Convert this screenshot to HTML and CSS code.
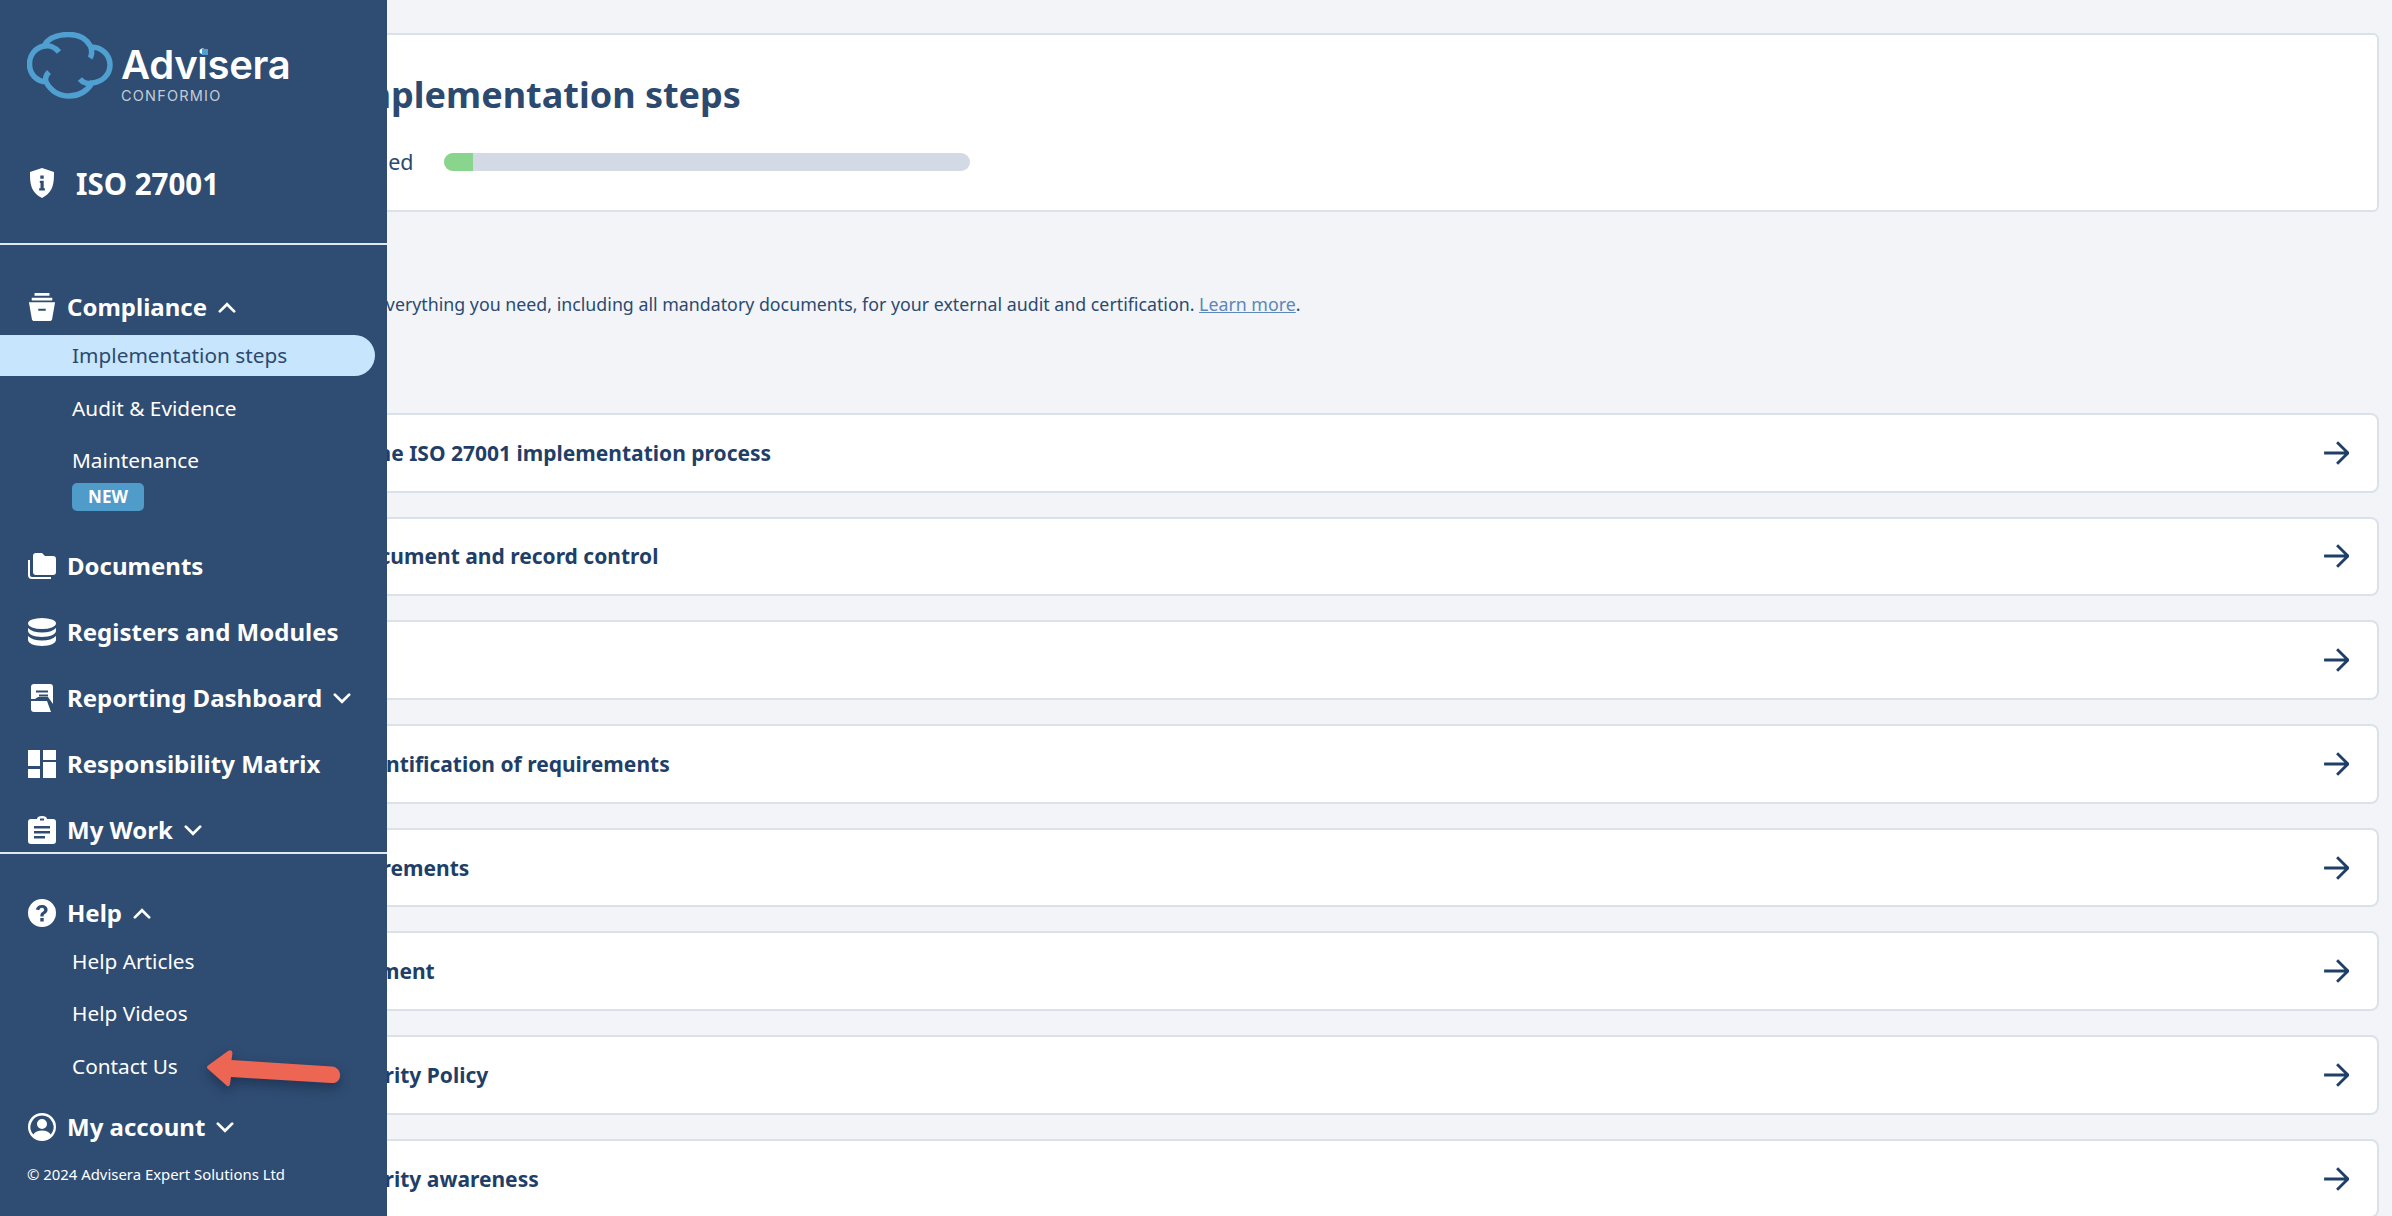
FILE: index.html
```html
<!DOCTYPE html>
<html lang="en">
<head>
<meta charset="utf-8">
<title>Implementation steps</title>
<link rel="stylesheet" href="styles.css">
</head>
<body>
<main class="main">
  <section class="head-card">
    <h1 class="title">Implementation steps</h1>
    <div class="progress-row">
      <span class="progress-label">Finished</span>
      <div class="track"><div class="fill"></div></div>
    </div>
  </section>
  <p class="intro">It has everything you need, including all mandatory documents, for your external audit and certification. <a class="learn" href="#">Learn more</a>.</p>
  <ul class="rows">
    <li class="row"><span class="indent-xs">Use the ISO 27001 implementation process</span><svg class="go" viewBox="0 0 24 24"><path d="M1 12h22M13 2l10 10-10 10"/></svg></li>
    <li class="row"><span class="indent-m">Document and record control</span><svg class="go" viewBox="0 0 24 24"><path d="M1 12h22M13 2l10 10-10 10"/></svg></li>
    <li class="row"><span>Plan</span><svg class="go" viewBox="0 0 24 24"><path d="M1 12h22M13 2l10 10-10 10"/></svg></li>
    <li class="row"><span class="indent-l">Identification of requirements</span><svg class="go" viewBox="0 0 24 24"><path d="M1 12h22M13 2l10 10-10 10"/></svg></li>
    <li class="row"><span>Requirements</span><svg class="go" viewBox="0 0 24 24"><path d="M1 12h22M13 2l10 10-10 10"/></svg></li>
    <li class="row"><span class="indent-xs">Statement</span><svg class="go" viewBox="0 0 24 24"><path d="M1 12h22M13 2l10 10-10 10"/></svg></li>
    <li class="row"><span class="indent-s">Security Policy</span><svg class="go" viewBox="0 0 24 24"><path d="M1 12h22M13 2l10 10-10 10"/></svg></li>
    <li class="row"><span class="indent-s">Security awareness</span><svg class="go" viewBox="0 0 24 24"><path d="M1 12h22M13 2l10 10-10 10"/></svg></li>
  </ul>
</main>

<aside class="sidebar">
  <div class="logo">
    <svg class="cloud" viewBox="0 0 86 67"><path d="M17 14C21 6 31 2.500 42 2.500C52 2.500 60 7 64 15C75 15 83 23 83 33C83 43 75 50 65 51C60 59 52 64 42 64C32 64 24 59 19 50C9 49 2.500 42 2.500 32C2.500 23 8 16 17 14Z"/><path d="M17 14c5-1 11 1 15 6M64 15c1 4 1 8-1 11M19 50c-1-3 0-7 3-10M65 51c-4 1-9 0-12-4"/></svg>
    <div class="wordmark">
      <div class="brand">Advisera<i class="brand-dot"></i></div>
      <div class="product">CONFORMIO</div>
    </div>
  </div>
  <div class="iso">
    <svg class="iso-icon" viewBox="0 0 24 30"><path fill-rule="evenodd" d="M12 0l12 4c0 10 0 20-12 26C0 24 0 14 0 4zM10.300 7.500h3.400v3.200h-3.400zM9.800 12.800h3.900v7.400h1.200v2.300H9.200v-2.300h1.300v-5.100H9.800z"/></svg>
    <span>ISO 27001</span>
  </div>
  <div class="divider"></div>
  <nav class="nav-top">
    <div class="item">
      <svg class="icon" viewBox="0 0 28 30"><path fill-rule="evenodd" d="M6 0h16v3H6zM3 5h22v3H3zM0 10h28l-3 17c0 2-1 3-3 3H6c-2 0-3-1-3-3zM10 17v2h8v-2z"/></svg>
      <span>Compliance</span>
      <svg class="chev" viewBox="0 0 16 10"><path d="M1.500 8.500L8 2l6.500 6.500"/></svg>
    </div>
    <a class="sub active">Implementation steps</a>
    <a class="sub">Audit &amp; Evidence</a>
    <a class="sub sub-badge">Maintenance</a>
    <span class="badge">NEW</span>
    <div class="item item-docs">
      <svg class="icon" viewBox="0 0 28 26"><path d="M5 3c0-2 1-3 3-3h6l3 3h8c2 0 3 1 3 3v13c0 2-1 3-3 3H8c-2 0-3-1-3-3z"/><path class="line" d="M1 7v15c0 2 1 3 3 3h19"/></svg>
      <span>Documents</span>
    </div>
    <div class="item">
      <svg class="icon" viewBox="0 0 28 28"><ellipse cx="14" cy="5.500" rx="14" ry="5.500"/><path d="M0 10c3 3 8 4.500 14 4.500S25 13 28 10v3c0 3-6 6-14 6S0 16 0 13zM0 18c3 3 8 4.500 14 4.500S25 21 28 18v4c0 3-6 6-14 6S0 25 0 22z"/></svg>
      <span>Registers and Modules</span>
    </div>
    <div class="item">
      <svg class="icon" viewBox="0 0 28 28"><path fill-rule="evenodd" d="M6 0H22c2 0 3 1 3 3V20L20 13H10L7 15H3V3C3 1 4 0 6 0zM8 6.500v2h12v-2zM11 10.500v2h9v-2z"/><path d="M3 17H19L23 28H6c-2 0-3-1-3-3z"/></svg>
      <span>Reporting Dashboard</span>
      <svg class="chev" viewBox="0 0 16 10"><path d="M1.500 1.500L8 8l6.500-6.500"/></svg>
    </div>
    <div class="item">
      <svg class="icon" viewBox="0 0 28 28"><path d="M0 0h12v16H0zM15 0h13v10H15zM15 12h13v16H15zM0 19h12v9H0z"/></svg>
      <span>Responsibility Matrix</span>
    </div>
    <div class="item">
      <svg class="icon" viewBox="0 0 28 28"><path fill-rule="evenodd" d="M3 3h6c0-2 2-3 5-3s5 1 5 3h6c2 0 3 1 3 3v19c0 2-1 3-3 3H3c-2 0-3-1-3-3V6c0-2 1-3 3-3zM12 2.500v2h4v-2zM6 10v2.500h16V10zM6 15v2.500h16V15zM6 20v2.500h11V20z"/></svg>
      <span>My Work</span>
      <svg class="chev" viewBox="0 0 16 10"><path d="M1.500 1.500L8 8l6.500-6.500"/></svg>
    </div>
  </nav>
  <div class="divider"></div>
  <nav class="nav-bottom">
    <div class="item">
      <svg class="icon" viewBox="0 0 28 28"><path fill-rule="evenodd" d="M14 0a14 14 0 110 28 14 14 0 010-28zM8 10.500l3.200.7c.4-1.500 1.200-2.400 2.700-2.400 1.300 0 2.200.8 2.200 1.900 0 1-.6 1.500-1.700 2.300-1.500 1-2 2-2 3.700v.8h3.200v-.5c0-1 .4-1.400 1.500-2.200 1.600-1.100 2.500-2.200 2.500-4.100 0-3-2.500-4.800-5.700-4.800-3.300 0-5.400 1.800-6.100 4.600zM12.300 19v3.500h3.400V19z"/></svg>
      <span>Help</span>
      <svg class="chev" viewBox="0 0 16 10"><path d="M1.500 8.500L8 2l6.500 6.500"/></svg>
    </div>
    <a class="sub">Help Articles</a>
    <a class="sub">Help Videos</a>
    <a class="sub">Contact Us</a>
    <div class="item item-account">
      <svg class="icon" viewBox="0 0 28 28"><path fill-rule="evenodd" d="M14 0a14 14 0 110 28 14 14 0 010-28zM14 2.500a11.500 11.500 0 00-8.700 19C7 19 10 17.500 14 17.500s7 1.500 8.700 4A11.500 11.500 0 0014 2.500zM14 6a5 5 0 110 10 5 5 0 010-10z"/></svg>
      <span>My account</span>
      <svg class="chev" viewBox="0 0 16 10"><path d="M1.500 1.500L8 8l6.500-6.500"/></svg>
    </div>
    <div class="copyright">© 2024 Advisera Expert Solutions Ltd</div>
  </nav>
</aside>

<svg class="pointer" viewBox="0 0 150 50"><path d="M5 21Q3 19 5 17.500L25 3Q29 1 29.500 5L28.500 12L129 18.500C140 19.500 140 36 128 35L28 29L27 36Q26 40 23 37z"/></svg>
</body>
</html>
```
FILE: styles.css
```css
* { box-sizing: border-box; }
html, body { margin: 0; height: 100%; }
body {
  position: relative;
  width: 2392px;
  height: 1216px;
  overflow: hidden;
  background: #f2f4f8;
  font-family: "Noto Sans", "Open Sans", sans-serif;
  color: #2c4a70;
}

/* Main column */
.main { padding: 33px 13px 0 300px; }
.head-card {
  height: 179px;
  padding: 35px 0 0 27px;
  background: #fff;
  border: 2px solid #dbe1ea;
  border-radius: 6px;
}
.title { margin: 0 0 0 13px; font-size: 36px; line-height: 50px; font-weight: 700; color: #2c4a70; }
.progress-row { display: flex; align-items: center; gap: 31px; margin-top: 27px; }
.progress-label { font-size: 21.500px; line-height: 30px; }
.track { width: 526px; height: 18px; border-radius: 9px; background: #d3dae5; overflow: hidden; }
.fill { width: 29px; height: 100%; background: #89d58d; }
.intro { margin: 78px 0 0 25px; font-size: 17.800px; line-height: 28px; white-space: nowrap; }
.learn { color: #5d87b8; text-decoration: underline; }
.rows { list-style: none; margin: 95px 0 0; padding: 0; display: flex; flex-direction: column; gap: 24.200px; }
.row {
  display: flex;
  flex: none;
  justify-content: space-between;
  align-items: center;
  height: 79.500px;
  padding: 0 28px 0 20px;
  background: #fff;
  border: 2px solid #dbe1ea;
  border-radius: 8px;
  font-size: 21px;
  font-weight: 700;
  color: #1f3f69;
}
.indent-xs { padding-left: 2px; }
.indent-s { padding-left: 14px; }
.indent-m { padding-left: 29px; }
.indent-l { padding-left: 30px; }
.go { width: 26px; height: 26px; fill: none; stroke: #1f3f69; stroke-width: 2.600; }

/* Sidebar overlay */
.sidebar {
  position: absolute;
  left: 0;
  top: 0;
  width: 387px;
  height: 1216px;
  background: #2f4c72;
  color: #fff;
  display: flex;
  flex-direction: column;
}
.logo { display: flex; align-items: flex-start; gap: 8px; height: 167px; padding: 32px 0 0 27px; }
.cloud { width: 86px; height: 67px; fill: none; stroke: #4f9fd0; stroke-width: 5.500; flex: none; }
.wordmark { padding-top: 12px; }
.brand { position: relative; font-family: "Inter", sans-serif; font-size: 40px; line-height: 42px; font-weight: 600; letter-spacing: -0.3px; }
.brand-dot { position: absolute; left: 81px; top: 5px; width: 6px; height: 6px; background: #4f9fd0; }
.product { margin-top: 2px; font-family: "Inter", sans-serif; font-size: 14.500px; line-height: 15px; letter-spacing: 1.200px; color: #c4ccd7; }
.iso { display: flex; align-items: center; gap: 22px; height: 32px; padding-left: 30px; font-size: 29.500px; font-weight: 700; }
.iso-icon { width: 24px; height: 30px; fill: #fff; flex: none; }
.divider { flex: none; height: 2px; background: #dfe7f1; }
.iso + .divider { margin-top: 44px; }
.nav-top { height: 607px; padding-top: 46px; overflow: hidden; }
.item { display: flex; align-items: center; height: 32px; padding-left: 28px; font-size: 24px; line-height: 32px; font-weight: 700; margin-bottom: 34px; }
.item:first-child { margin-bottom: 11.500px; }
.icon { width: 28px; height: 28px; margin-right: 11px; fill: #fff; flex: none; }
.icon .line { fill: none; stroke: #fff; stroke-width: 2; }
.chev { width: 18px; height: 11px; margin-left: 11px; fill: none; stroke: #fff; stroke-width: 2.500; stroke-linecap: round; }
.sub { display: flex; align-items: center; height: 41px; padding-left: 72px; margin: 0 12px 11.500px 0; font-size: 20.800px; border-radius: 0 21px 21px 0; }
.active { background: #c7e5fc; color: #2c4a70; }
.sub-badge { margin-bottom: 2px; }
.badge { display: block; width: 72px; height: 28px; margin: 0 0 39.500px 72px; border-radius: 5px; background: #4f9bc9; font-size: 17px; line-height: 28px; font-weight: 700; text-align: center; }
.nav-bottom { padding-top: 43px; }
.nav-bottom .item:first-child { margin-bottom: 11px; }
.item-account { margin: 25px 0 0; }
.copyright { margin-top: 21px; padding-left: 27px; font-size: 14.900px; line-height: 20px; }

/* Red annotation arrow drawn over the page */
.pointer {
  position: absolute;
  left: 203px;
  top: 1048px;
  width: 150px;
  height: 50px;
  fill: #ec6653;
  filter: drop-shadow(0 5px 6px rgba(10, 25, 50, .45));
  overflow: visible;
}
```
